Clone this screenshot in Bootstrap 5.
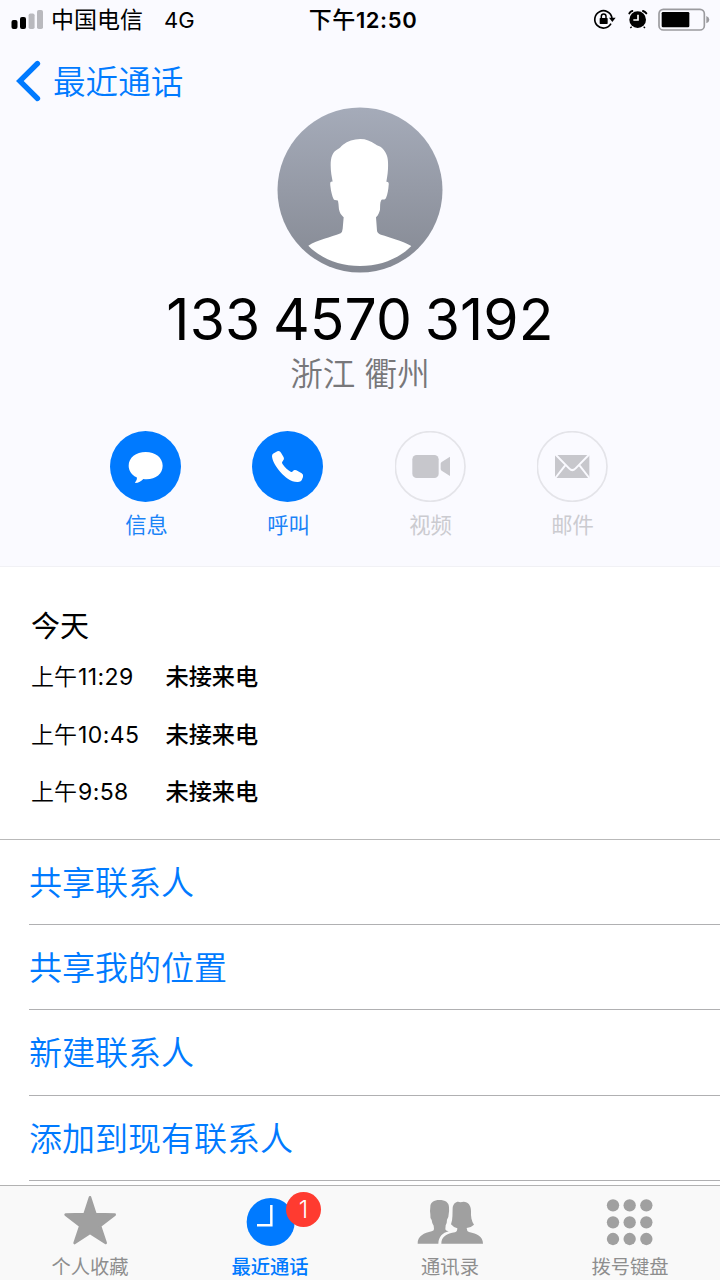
<!DOCTYPE html>
<html lang="zh-CN">
<head>
<meta charset="utf-8">
<meta name="viewport" content="width=device-width, initial-scale=1">
<title>最近通话</title>
<link href="https://cdn.jsdelivr.net/npm/bootstrap@5.3.0/dist/css/bootstrap.min.css" rel="stylesheet">
<style>
  :root { --ios-blue: #007aff; --ios-gray: #a0a0a0; }
  body { font-family: Inter, "Noto Sans CJK SC", sans-serif; color: #000; background: #fff; overflow: hidden; }
  svg { display: block; flex: none; }
  .phone { width: 720px; height: 1280px; overflow: hidden; }
  .contact-head { height: 567px; background: #fafaff; border-bottom: 1px solid #f1f1f5; flex: none; }
  .status-row { height: 40px; line-height: 40px; font-size: 23px; }
  .status-side { width: 300px; }
  .carrier { margin-left: 3px; }
  .net { margin-left: 21px; font-size: 22px; }
  .status-time { width: 126px; font-size: 22px; font-weight: 600; letter-spacing: .6px; }
  .status-time span { font-weight: 500; font-size: 23px; }
  .back-row { height: 67px; padding: 14px 0 0 15px; }
  .back-row a { font-size: 32.6px; line-height: 50px; color: var(--ios-blue); font-weight: 350; }
  .back-row span { margin-left: 12px; padding-top: 3px; }
  .phone-number { font-size: 57px; line-height: 68px; margin-top: 13px; letter-spacing: .1px; word-spacing: -3.5px; }
  .region { font-size: 32.6px; line-height: 40px; color: #77777a; font-weight: 350; }
  .actions { margin-top: 37px; padding-left: 75px; }
  .action { width: 142px; font-size: 21.3px; line-height: 30px; color: #1a83f7; }
  .action svg { margin-bottom: 8px; margin-right: 1px; }
  .action span { padding-left: 1px; }
  .action.off { color: #cbcbd0; }
  .action.off svg { margin-right: 0; }
  .log { height: 272px; padding: 37px 31px 0; }
  .log h2 { font-size: 29px; line-height: 45px; }
  .log-row { height: 57.6px; font-size: 23.2px; line-height: 57.6px; }
  .log-time { width: 134.5px; font-size: 23px; font-weight: 350; }
  .log-time b { font-weight: 400; letter-spacing: .4px; margin-left: 1px; }
  .log-kind { font-weight: 500; }
  .links { border-top: 1px solid #b9b9b9; padding-left: 29px; height: 346px; }
  .links a { height: 85.2px; line-height: 86px; font-size: 33px; font-weight: 350; color: var(--ios-blue); border-bottom: 1px solid #b0b0b2; }
  .tabs { height: 95px; background: #f9f9f9; border-top: 1px solid #b2b2b2; }
  .tab { width: 180px; color: #8e8e8e; font-size: 19.3px; line-height: 30px; }
  .tab svg { margin-top: 4px; }
  .tab.on { color: var(--ios-blue); font-weight: 500; }
  .missed { left: 106px; top: 6px; width: 35px; height: 35px; background: #ff3b30; color: #fff; font-size: 24px; line-height: 35px; font-weight: 300; }
</style>
</head>
<body>
<div class="phone d-flex flex-column">
  <header class="contact-head d-flex flex-column">
    <div class="status-row d-flex align-items-center">
      <div class="status-side d-flex align-items-center">
        <svg class="ms-2" width="40" height="40" viewBox="8 0 40 40">
          <rect x="11.5" y="20" width="6" height="9" rx="2"/><rect x="20" y="17" width="6" height="12" rx="2"/>
          <g fill="#b9b9be"><rect x="28.6" y="13.5" width="6" height="15.5" rx="1.8"/><rect x="37" y="10" width="6" height="19" rx="1.8"/></g>
        </svg>
        <span class="carrier">中国电信</span><span class="net">4G</span>
      </div>
      <div class="status-time text-center text-nowrap"><span>下午</span>12:50</div>
      <svg class="ms-auto" width="140" height="40" viewBox="0 0 420 120">
        <g fill="none" stroke="#000"><path d="M93 71A26 26 0 1 1 96 54" stroke-width="5"/><path d="M64 56v-7a7 7 0 0 1 14 0v7" stroke-width="4.500"/></g>
        <rect x="59" y="54" width="24" height="18" rx="2"/><path d="M87 53h20l-10 13z"/>
        <circle cx="173" cy="59" r="25"/><path d="M174 44v16h-14" fill="none" stroke="#fff" stroke-width="5"/>
        <g fill="none" stroke="#000" stroke-width="6" stroke-linecap="round"><path d="M148 40q3-6 9-7M189 33q6 2 10 7"/></g>
        <path d="M155 80l-4 4M191 80l4 4" stroke="#000" stroke-width="4"/>
        <rect x="237" y="28" width="136" height="62" rx="13" fill="none" stroke="#9b9b9f" stroke-width="5"/>
        <rect x="245" y="36" width="83" height="46" rx="4"/><path d="M379 48q9 4 9 11t-9 11z" fill="#9b9b9f"/>
      </svg>
    </div>
    <nav class="back-row">
      <a href="#" class="d-flex align-items-center text-decoration-none">
        <svg width="26" height="44" viewBox="15.500 58.500 26 44"><path d="M38 63L20.300 80.500l17.700 17.500" fill="none" stroke="#007aff" stroke-width="5.300" stroke-linecap="round" stroke-linejoin="miter"/></svg>
        <span>最近通话</span>
      </a>
    </nav>
    <svg class="mx-auto" width="166" height="166" viewBox="36 36 498 498">
      <defs><linearGradient id="face" x1="0" y1="0" x2="0" y2="1"><stop offset="0" stop-color="#a5abb9"/><stop offset="1" stop-color="#858993"/></linearGradient></defs>
      <circle cx="285" cy="285" r="247.5" fill="url(#face)"/>
      <path fill="#fff" d="M286 132C266 132 248 139 234 149C227 154 226 159 218 163C202 171 197 188 197 211C197 230 200 245 203 260C196 259 195 263 196 272C198 291 202 304 206 313C210 318 216 313 219 318C222 330 220 340 224 350C227 359 232 362 236 367L233 401Q232 412 227 415C197 427 158 435 130 452C168 491 224 513 285 513S402 491 439 453C408 436 376 428 348 419Q337 415 336 407L333 367C340 361 343 352 345 344C346 335 344 323 349 315C353 311 359 317 363 309C368 297 370 284 371 270Q373 259 364 260C368 240 370 220 369 202C369 182 361 169 351 159C345 153 338 154 330 147C317 138 303 132 286 132Z"/>
    </svg>
    <div class="phone-number text-center text-nowrap">133 4570 3192</div>
    <div class="region text-center">浙江 衢州</div>
    <div class="actions d-flex">
      <div class="action d-flex flex-column align-items-center">
        <svg width="71" height="71" viewBox="61 33 213 213"><circle cx="167.500" cy="139.500" r="106.500" fill="#007aff"/><path fill="#fff" d="M168 96C139 96 117 113 117 137C117 152 126 165 141 172C144 180 137 185 136 189C147 189 155 184 161 177C195 181 219 163 219 137C219 113 197 96 168 96Z"/></svg><span>信息</span>
      </div>
      <div class="action d-flex flex-column align-items-center">
        <svg width="71" height="71" viewBox="486 33 213 213"><circle cx="592.500" cy="139.500" r="106.500" fill="#007aff"/><path fill="#fff" d="M549 101L562 94Q569 91 573 98L581 112Q584 118 579 122Q574 126 577 131C584 142 593 149 602 155Q606 157 609 153Q613 148 619 151L635 160Q641 164 639 171L635 181Q632 186 624 186C603 187 586 172 571 156C558 141 547 123 546 109Q546 103 549 101Z"/></svg><span>呼叫</span>
      </div>
      <div class="action off d-flex flex-column align-items-center">
        <svg width="71" height="71" viewBox="45 33 213 213"><circle cx="150.500" cy="139.500" r="104.500" fill="none" stroke="#e4e4e9" stroke-width="5"/><rect x="97" y="105" width="79" height="69" rx="13" fill="#c7c7cc"/><path d="M210 110v58l-25-16q-3-2-3-5v-16q0-3 3-5z" fill="#c7c7cc"/></svg><span>视频</span>
      </div>
      <div class="action off d-flex flex-column align-items-center">
        <svg width="71" height="71" viewBox="471 33 213 213"><circle cx="576.500" cy="139.500" r="104.500" fill="none" stroke="#e4e4e9" stroke-width="5"/><rect x="525" y="105" width="103" height="69" fill="#c7c7cc"/><path d="M525 102l43 44q9 9 18 0l43-44M555 137l-29 37M599 137l29 37" fill="none" stroke="#fafaff" stroke-width="6"/></svg><span>邮件</span>
      </div>
    </div>
  </header>
  <section class="log flex-shrink-0">
    <h2 class="fw-normal mb-0">今天</h2>
    <div class="log-row d-flex"><span class="log-time">上午<b>11:29</b></span><span class="log-kind">未接来电</span></div>
    <div class="log-row d-flex"><span class="log-time">上午<b>10:45</b></span><span class="log-kind">未接来电</span></div>
    <div class="log-row d-flex"><span class="log-time">上午<b>9:58</b></span><span class="log-kind">未接来电</span></div>
  </section>
  <section class="links flex-shrink-0">
    <a href="#" class="d-block text-decoration-none">共享联系人</a>
    <a href="#" class="d-block text-decoration-none">共享我的位置</a>
    <a href="#" class="d-block text-decoration-none">新建联系人</a>
    <a href="#" class="d-block text-decoration-none">添加到现有联系人</a>
  </section>
  <footer class="tabs d-flex flex-shrink-0">
    <div class="tab d-flex flex-column align-items-center">
      <svg width="60" height="62" viewBox="180 330 180 186"><path fill="#a0a0a0" stroke="#a0a0a0" stroke-width="8" stroke-linejoin="round" d="M270 352L286 402L344 404L300 438L317 489L270 459L224 489L241 438L197 404L254 402Z"/></svg>个人收藏
    </div>
    <div class="tab on position-relative d-flex flex-column align-items-center">
      <svg width="60" height="62" viewBox="720 330 180 186"><circle cx="812" cy="426" r="72" fill="#007aff"/><path d="M814 375v61h-43" fill="none" stroke="#fff" stroke-width="7.500"/></svg>最近通话
      <span class="missed position-absolute rounded-circle text-center">1</span>
    </div>
    <div class="tab d-flex flex-column align-items-center">
      <svg width="70" height="62" viewBox="165 60 210 186"><g fill="#a0a0a0"><path d="M173 221C172 198 193 189 215 184Q222 182 222 177L221 167Q216 161 215 150Q210 145 211 133Q209 125 211 110C211 97 222 90 238 90C256 90 267 98 267 111Q268 124 266 133Q266 144 261 149Q261 160 257 166L256 178Q256 182 266 184C248 188 236 200 235 221Z"/><path d="M244 221C244 200 261 191 285 187Q292 185 292 175Q281 173 273 163C279 147 277 129 278 113C280 99 291 92 301 97C320 90 333 103 333 123C332 140 335 154 342 164Q333 173 320 174Q320 183 327 186C351 191 369 200 369 221Z"/></g></svg>通讯录
    </div>
    <div class="tab d-flex flex-column align-items-center">
      <svg width="60" height="62" viewBox="720 60 180 186"><g fill="#a0a0a0"><circle cx="759" cy="106" r="18.500"/><circle cx="809" cy="106" r="18.500"/><circle cx="859" cy="106" r="18.500"/><circle cx="759" cy="157" r="18.500"/><circle cx="809" cy="157" r="18.500"/><circle cx="859" cy="157" r="18.500"/><circle cx="759" cy="207" r="18.500"/><circle cx="809" cy="207" r="18.500"/><circle cx="859" cy="207" r="18.500"/></g></svg>拨号键盘
    </div>
  </footer>
</div>
<script src="https://cdn.jsdelivr.net/npm/bootstrap@5.3.0/dist/js/bootstrap.bundle.min.js"></script>
</body>
</html>
